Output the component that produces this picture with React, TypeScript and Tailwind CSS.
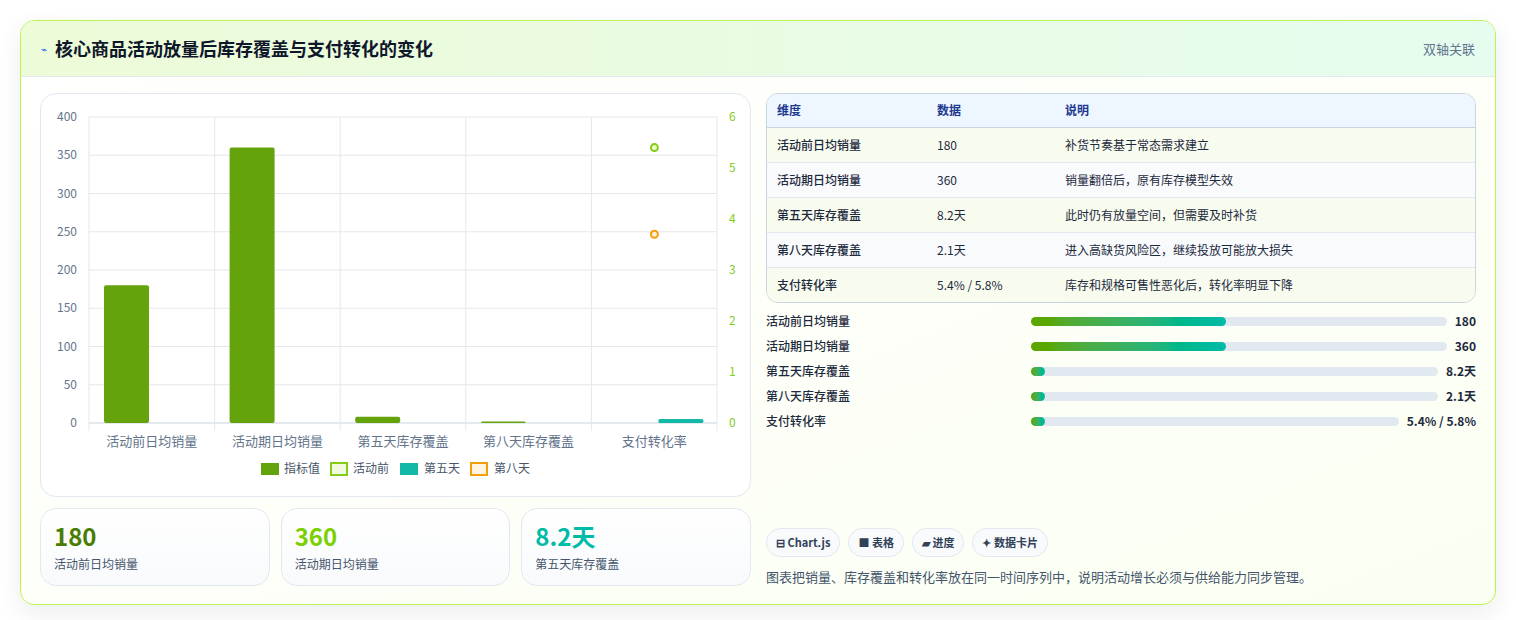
const font = { fontFamily: '"Noto Sans CJK SC", "Noto Sans", sans-serif' };

const rows = [
  { k: "活动前日均销量", v: "180", d: "补货节奏基于常态需求建立" },
  { k: "活动期日均销量", v: "360", d: "销量翻倍后，原有库存模型失效" },
  { k: "第五天库存覆盖", v: "8.2天", d: "此时仍有放量空间，但需要及时补货" },
  { k: "第八天库存覆盖", v: "2.1天", d: "进入高缺货风险区，继续投放可能放大损失" },
  { k: "支付转化率", v: "5.4% / 5.8%", d: "库存和规格可售性恶化后，转化率明显下降" },
];

const bars = [
  { k: "活动前日均销量", v: "180", w: 47 },
  { k: "活动期日均销量", v: "360", w: 47 },
  { k: "第五天库存覆盖", v: "8.2天", w: 3.5 },
  { k: "第八天库存覆盖", v: "2.1天", w: 3.5 },
  { k: "支付转化率", v: "5.4% / 5.8%", w: 3.5 },
];

function Chart() {
  const top = 23, bot = 329, left = 48, right = 676;
  const cw = (right - left) / 5;
  const y = (v: number) => bot - (v / 400) * (bot - top);
  const y2 = (v: number) => bot - (v / 6) * (bot - top);
  const cats = ["活动前日均销量", "活动期日均销量", "第五天库存覆盖", "第八天库存覆盖", "支付转化率"];
  const vals = [180, 360, 8.2, 2.1];
  return (
    <svg width="710" height="404" className="block" style={font}>
      {[0, 50, 100, 150, 200, 250, 300, 350, 400].map((t) => (
        <g key={t}>
          <line x1={left} x2={right} y1={y(t)} y2={y(t)} stroke={t === 0 ? "#cbd5e1" : "#e5e7eb"} />
          <text x={left - 12} y={y(t) + 4} textAnchor="end" fontSize="12" fill="#64748b">{t}</text>
        </g>
      ))}
      {[0, 1, 2, 3, 4, 5, 6].map((t) => (
        <text key={t} x={right + 12} y={y2(t) + 4} fontSize="12" fill="#84cc16">{t}</text>
      ))}
      {[0, 1, 2, 3, 4, 5].map((i) => (
        <line key={i} x1={left + i * cw} x2={left + i * cw} y1={top} y2={bot + 8} stroke="#e5e7eb" />
      ))}
      {vals.map((v, i) => {
        const h = Math.max(bot - y(v), 1);
        return <rect key={i} x={left + i * cw + 15} y={bot - h} width="45" height={h} rx="2" fill="#65a30d" />;
      })}
      <rect x={left + 4 * cw + 67} y={bot - 4} width="45" height="4" rx="1.5" fill="#14b8a6" />
      <circle cx={left + 4 * cw + 63} cy={y2(5.4)} r="3.5" fill="#ecfccb" stroke="#84cc16" strokeWidth="2" />
      <circle cx={left + 4 * cw + 63} cy={y2(3.7)} r="3.5" fill="#ffedd5" stroke="#f59e0b" strokeWidth="2" />
      {cats.map((c, i) => (
        <text key={c} x={left + i * cw + cw / 2} y={352} textAnchor="middle" fontSize="13" fill="#64748b">{c}</text>
      ))}
      <g fontSize="12" fill="#475569">
        <rect x="220" y="369" width="18" height="12" fill="#65a30d" />
        <text x="243" y="379">指标值</text>
        <rect x="290" y="369" width="16" height="12" fill="#f0fadf" stroke="#84cc16" strokeWidth="2" />
        <text x="312" y="379">活动前</text>
        <rect x="359" y="369" width="18" height="12" fill="#14b8a6" />
        <text x="383" y="379">第五天</text>
        <rect x="430" y="369" width="16" height="12" fill="#fff4e0" stroke="#f59e0b" strokeWidth="2" />
        <text x="453" y="379">第八天</text>
      </g>
    </svg>
  );
}

function Stat({ v, l, c }: { v: string; l: string; c: string }) {
  return (
    <div className="flex-1 rounded-2xl border border-slate-200 bg-gradient-to-b from-white to-slate-50 px-[13px] pt-[11px] pb-3">
      <div className={`text-[24px] font-bold leading-[32px] ${c}`}>{v}</div>
      <div className="mt-[3px] text-[12px] text-slate-600">{l}</div>
    </div>
  );
}

export default function App() {
  return (
    <div className="min-h-[620px] bg-white p-5" style={font}>
      <div className="overflow-hidden rounded-[14px] border border-lime-300 bg-gradient-to-br from-white to-[#fbfff2] shadow-[0_8px_24px_rgba(15,23,42,0.08)]">
        <div className="flex h-[56px] items-center justify-between border-b border-slate-200 bg-gradient-to-r from-[#edfbd8] to-[#e6fcee] px-5">
          <div className="flex items-center gap-2">
            <span className="text-[10px] text-blue-600">⌁</span>
            <h1 className="text-[18px] font-bold text-slate-900">核心商品活动放量后库存覆盖与支付转化的变化</h1>
          </div>
          <span className="text-[13px] text-slate-500">双轴关联</span>
        </div>
        <div className="flex gap-[15px] px-[19px] pt-4 pb-[18px]">
          <div className="flex w-[711px] flex-col gap-[11px]">
            <div className="h-[404px] rounded-2xl border border-slate-200 bg-white">
              <Chart />
            </div>
            <div className="flex gap-[11px]">
              <Stat v="180" l="活动前日均销量" c="text-lime-700" />
              <Stat v="360" l="活动期日均销量" c="text-lime-500" />
              <Stat v="8.2天" l="第五天库存覆盖" c="text-teal-500" />
            </div>
          </div>
          <div className="flex w-[711px] flex-col">
            <div className="overflow-hidden rounded-xl border border-slate-300">
              <table className="w-full text-[12px]">
                <thead>
                  <tr className="h-[33px] border-b border-slate-300 bg-[#eef6ff] text-left text-blue-900">
                    <th className="w-[170px] pl-[10px] font-bold">维度</th>
                    <th className="w-[128px] font-bold">数据</th>
                    <th className="font-bold">说明</th>
                  </tr>
                </thead>
                <tbody>
                  {rows.map((r, i) => (
                    <tr key={r.k} className={`h-[35px] text-slate-800 ${i < 4 ? "border-b border-slate-200" : ""} ${i % 2 === 0 ? "bg-[#f8fcef]" : "bg-slate-50"}`}>
                      <td className="pl-[10px] font-medium">{r.k}</td>
                      <td>{r.v}</td>
                      <td>{r.d}</td>
                    </tr>
                  ))}
                </tbody>
              </table>
            </div>
            <div className="mt-[10px] flex flex-col gap-[9px]">
              {bars.map((b) => (
                <div key={b.k} className="flex h-4 items-center text-[12px] text-slate-800">
                  <span className="w-[265px] shrink-0 font-medium">{b.k}</span>
                  <div className="h-[9px] flex-1 rounded-full bg-slate-200">
                    <div className="h-full min-w-[14px] rounded-full bg-gradient-to-r from-lime-600 to-teal-500" style={{ width: `${b.w}%` }} />
                  </div>
                  <span className="ml-2 font-bold">{b.v}</span>
                </div>
              ))}
            </div>
            <div className="mt-auto flex gap-2">
              {["⊟ Chart.js", "■ 表格", "▰ 进度", "✦ 数据卡片"].map((c) => (
                <span key={c} className="rounded-full border border-slate-200 bg-slate-50 px-[9px] py-[5px] text-[11px] font-bold text-slate-700">{c}</span>
              ))}
            </div>
            <p className="mt-[10px] text-[13px] text-slate-600">图表把销量、库存覆盖和转化率放在同一时间序列中，说明活动增长必须与供给能力同步管理。</p>
          </div>
        </div>
      </div>
    </div>
  );
}
